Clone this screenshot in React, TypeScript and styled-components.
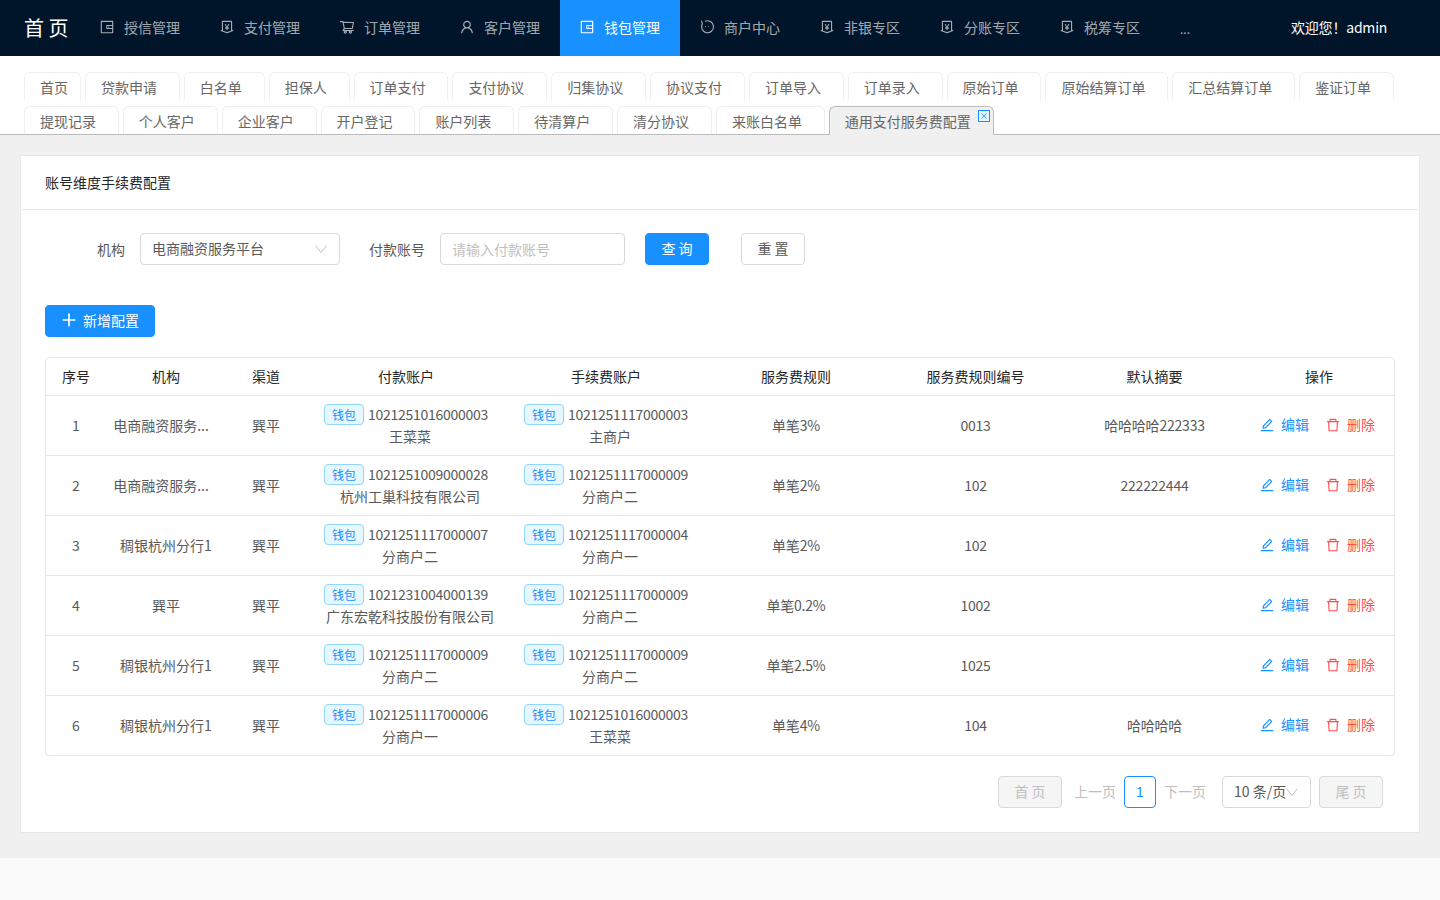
import React from "react";
import styled, { createGlobalStyle } from "styled-components";
import { Plus } from "lucide-react";
import {
  AiOutlineWallet,
  AiOutlineMoneyCollect,
  AiOutlineShoppingCart,
  AiOutlineUser,
  AiOutlineEdit,
  AiOutlineDelete,
  AiOutlineClose,
} from "react-icons/ai";

const GlobalStyle = createGlobalStyle`
  html, body {
    margin: 0;
    padding: 0;
    background: #fafafa;
    font-family: "Noto Sans CJK SC", "Liberation Sans", sans-serif;
    font-size: 14px;
    color: #595959;
  }
  * {
    box-sizing: border-box;
  }
`;

const Page = styled.div`
  width: 1440px;
  height: 900px;
  overflow: hidden;
  display: flex;
  flex-direction: column;
`;

const Header = styled.header`
  height: 56px;
  background: #001529;
  display: flex;
  align-items: stretch;
  flex-shrink: 0;
`;

const Brand = styled.div`
  width: 80px;
  padding-left: 24px;
  line-height: 56px;
  font-size: 20px;
  color: #fff;
  white-space: pre;
`;

const NavItem = styled.div<{ $active?: boolean }>`
  width: 120px;
  padding: 0 0 2px 19px;
  display: flex;
  align-items: center;
  gap: 9px;
  color: ${(p) => (p.$active ? "#fff" : "rgba(255, 255, 255, 0.65)")};
  background: ${(p) => (p.$active ? "#1890ff" : "transparent")};
  svg {
    font-size: 16px;
  }
`;

const More = styled.div`
  width: 131px;
  padding-left: 20px;
  line-height: 58px;
  font-size: 12px;
  color: rgba(255, 255, 255, 0.65);
`;

const Welcome = styled.div`
  line-height: 54px;
  color: #fff;
  white-space: pre;
  letter-spacing: -0.2px;
`;

const TabStrip = styled.div`
  background: #fff;
  padding: 16px 24px 0;
  border-bottom: 1px solid #bbb;
  display: flex;
  flex-wrap: wrap;
  column-gap: 4px;
  row-gap: 6px;
  height: 79px;
  flex-shrink: 0;
`;

const Tab = styled.div<{ $active?: boolean; $home?: boolean }>`
  position: relative;
  height: ${(p) => (p.$active ? "29px" : "28px")};
  padding: 0 ${(p) => (p.$home ? "12px" : "21.85px")} 0 15px;
  line-height: 28px;
  white-space: nowrap;
  border: 1px solid ${(p) => (p.$active ? "#bbb" : "#efefef")};
  border-bottom: none;
  border-radius: 6px 6px 0 0;
  background: ${(p) => (p.$active ? "#f0f0f0" : "#fff")};
  color: #666;
`;

const TabClose = styled.span`
  position: absolute;
  top: 3px;
  right: 3px;
  width: 12px;
  height: 12px;
  border: 1px solid #1890ff;
  background: #e6f7ff;
  color: #1890ff;
  display: flex;
  align-items: center;
  justify-content: center;
  font-size: 8px;
`;

const Content = styled.main`
  background: #f0f0f0;
  padding: 20px 20px 25px;
  flex-shrink: 0;
`;

const Card = styled.section`
  background: #fff;
  border: 1px solid #e8e8e8;
  height: 678px;
`;

const CardTitle = styled.div`
  height: 54px;
  padding-left: 24px;
  line-height: 52px;
  border-bottom: 1px solid #e8e8e8;
  color: #262626;
`;

const FilterRow = styled.div`
  display: flex;
  align-items: center;
  height: 32px;
  margin-top: 23px;
`;

const FieldLabel = styled.label<{ $width: number }>`
  width: ${(p) => p.$width}px;
  padding-right: 15px;
  text-align: right;
  color: #595959;
`;

const SelectBox = styled.div<{ $width: number }>`
  width: ${(p) => p.$width}px;
  height: 32px;
  padding: 0 12px 2px 11px;
  display: flex;
  align-items: center;
  justify-content: space-between;
  border: 1px solid #d9d9d9;
  border-radius: 4px;
  background: #fff;
  color: #595959;
  white-space: nowrap;
  svg {
    margin-top: 2px;
  }
`;

const TextInput = styled.input`
  width: 185px;
  height: 32px;
  padding: 0 11px;
  border: 1px solid #d9d9d9;
  border-radius: 4px;
  font: inherit;
  outline: none;
  &::placeholder {
    color: #bfbfbf;
  }
`;

const Button = styled.button<{ $primary?: boolean; $disabled?: boolean; $gap: number }>`
  width: 64px;
  height: 32px;
  margin-left: ${(p) => p.$gap}px;
  padding: 0 0 2px;
  border: 1px solid ${(p) => (p.$primary ? "#1890ff" : "#d9d9d9")};
  border-radius: 4px;
  background: ${(p) => (p.$primary ? "#1890ff" : p.$disabled ? "#f5f5f5" : "#fff")};
  color: ${(p) => (p.$primary ? "#fff" : p.$disabled ? "#bfbfbf" : "#595959")};
  font: inherit;
  white-space: pre;
`;

const AddButton = styled.button`
  display: flex;
  align-items: center;
  gap: 4px;
  width: 110px;
  height: 32px;
  margin: 40px 0 0 24px;
  padding: 0 0 2px 13px;
  border: 1px solid #1890ff;
  border-radius: 4px;
  background: #1890ff;
  color: #fff;
  font: inherit;
`;

const TableWrap = styled.div`
  margin: 20px 24px 0;
  border: 1px solid #e8e8e8;
  border-radius: 4px;
  overflow: hidden;
`;

const Table = styled.table`
  width: 100%;
  table-layout: fixed;
  border-collapse: collapse;
  text-align: center;
`;

const Th = styled.th`
  height: 37px;
  padding: 0;
  font-weight: 400;
  color: #262626;
  border-bottom: 1px solid #e8e8e8;
`;

const Td = styled.td<{ $tight?: boolean }>`
  height: 60px;
  padding: 0;
  color: #595959;
  border-bottom: 1px solid #e8e8e8;
  line-height: 22px;
  letter-spacing: ${(p) => (p.$tight ? "-0.2px" : "normal")};
  tr:last-child & {
    border-bottom: none;
  }
`;

const OrgName = styled.div<{ $truncated: boolean }>`
  padding-right: ${(p) => (p.$truncated ? "10px" : "0")};
`;

const AccountLine = styled.div`
  display: flex;
  justify-content: center;
  align-items: flex-start;
  gap: 4px;
  height: 22px;
`;

const Badge = styled.span`
  width: 40px;
  height: 21px;
  margin-top: 1px;
  border: 1px solid #91d5ff;
  border-radius: 4px;
  background: #e6f7ff;
  color: #1890ff;
  font-size: 12px;
  line-height: 20px;
`;

const Digits = styled.span`
  letter-spacing: -0.27px;
`;

const AccountName = styled.div`
  padding-left: 8px;
  white-space: nowrap;
`;

const Actions = styled.div`
  display: flex;
  justify-content: flex-end;
  padding-right: 19px;
  margin-top: -2px;
  gap: 16px;
`;

const ActionLink = styled.a<{ $danger?: boolean }>`
  display: flex;
  align-items: center;
  gap: 6px;
  color: ${(p) => (p.$danger ? "#ff4d4f" : "#1890ff")};
  svg {
    font-size: 16px;
    margin-top: 2px;
  }
`;

const Pager = styled.div`
  display: flex;
  align-items: center;
  justify-content: flex-end;
  margin: 20px 36px 0 0;
`;

const PagerText = styled.span<{ $gap: number }>`
  margin-left: ${(p) => p.$gap}px;
  padding-bottom: 2px;
  color: #bfbfbf;
`;

const PageNumber = styled.span`
  width: 32px;
  height: 32px;
  margin-left: 8px;
  border: 1px solid #1890ff;
  border-radius: 4px;
  color: #1890ff;
  line-height: 30px;
  text-align: center;
  font-family: "Liberation Sans", sans-serif;
`;

const PageSize = styled(SelectBox)`
  margin-left: 16px;
`;

const FooterBand = styled.div`
  flex: 1;
  background: #fafafa;
`;

function Chevron() {
  return (
    <svg width="12" height="8" viewBox="0 0 12 8" fill="none" stroke="#bfbfbf" strokeWidth="1">
      <polyline points="0.5,0.5 6,7.5 11.5,0.5" />
    </svg>
  );
}

function MerchantIcon() {
  return (
    <svg width="1em" height="1em" viewBox="0 0 16 16" fill="none" stroke="currentColor" strokeWidth="1.1">
      <path d="M2.4 1.6 L3.4 4.6 A6 6 0 1 0 6 2.3" />
      <circle cx="6.6" cy="7.6" r="0.5" fill="currentColor" stroke="none" />
      <circle cx="9.6" cy="7.6" r="0.5" fill="currentColor" stroke="none" />
    </svg>
  );
}

const navItems = [
  { label: "授信管理", icon: <AiOutlineWallet /> },
  { label: "支付管理", icon: <AiOutlineMoneyCollect /> },
  { label: "订单管理", icon: <AiOutlineShoppingCart /> },
  { label: "客户管理", icon: <AiOutlineUser /> },
  { label: "钱包管理", icon: <AiOutlineWallet />, active: true },
  { label: "商户中心", icon: <MerchantIcon /> },
  { label: "非银专区", icon: <AiOutlineMoneyCollect /> },
  { label: "分账专区", icon: <AiOutlineMoneyCollect /> },
  { label: "税筹专区", icon: <AiOutlineMoneyCollect /> },
];

const tabs = [
  "首页", "贷款申请", "白名单", "担保人", "订单支付", "支付协议", "归集协议", "协议支付",
  "订单导入", "订单录入", "原始订单", "原始结算订单", "汇总结算订单", "鉴证订单",
  "提现记录", "个人客户", "企业客户", "开户登记", "账户列表", "待清算户", "清分协议", "来账白名单",
];

const columns = [
  { title: "序号", width: 60 },
  { title: "机构", width: 120 },
  { title: "渠道", width: 80 },
  { title: "付款账户", width: 200 },
  { title: "手续费账户", width: 200 },
  { title: "服务费规则", width: 180 },
  { title: "服务费规则编号", width: 179 },
  { title: "默认摘要", width: 179 },
  { title: "操作", width: 150 },
];

const rows = [
  { org: "电商融资服务...", payNo: "1021251016000003", payName: "王菜菜", feeNo: "1021251117000003", feeName: "主商户", rule: "单笔3%", code: "0013", memo: "哈哈哈哈222333" },
  { org: "电商融资服务...", payNo: "1021251009000028", payName: "杭州工巢科技有限公司", feeNo: "1021251117000009", feeName: "分商户二", rule: "单笔2%", code: "102", memo: "222222444" },
  { org: "稠银杭州分行1", payNo: "1021251117000007", payName: "分商户二", feeNo: "1021251117000004", feeName: "分商户一", rule: "单笔2%", code: "102", memo: "" },
  { org: "巽平", payNo: "1021231004000139", payName: "广东宏乾科技股份有限公司", feeNo: "1021251117000009", feeName: "分商户二", rule: "单笔0.2%", code: "1002", memo: "" },
  { org: "稠银杭州分行1", payNo: "1021251117000009", payName: "分商户二", feeNo: "1021251117000009", feeName: "分商户二", rule: "单笔2.5%", code: "1025", memo: "" },
  { org: "稠银杭州分行1", payNo: "1021251117000006", payName: "分商户一", feeNo: "1021251016000003", feeName: "王菜菜", rule: "单笔4%", code: "104", memo: "哈哈哈哈" },
];

function Account({ no, name }: { no: string; name: string }) {
  return (
    <>
      <AccountLine>
        <Badge>钱包</Badge>
        <Digits>{no}</Digits>
      </AccountLine>
      <AccountName>{name}</AccountName>
    </>
  );
}

export default function App() {
  return (
    <Page>
      <GlobalStyle />
      <Header>
        <Brand>首 页</Brand>
        {navItems.map((item) => (
          <NavItem key={item.label} $active={item.active}>
            {item.icon}
            {item.label}
          </NavItem>
        ))}
        <More>...</More>
        <Welcome>欢迎您！admin</Welcome>
      </Header>

      <TabStrip>
        {tabs.map((t) => (
          <Tab key={t} $home={t === "首页"}>
            {t}
          </Tab>
        ))}
        <Tab $active>
          通用支付服务费配置
          <TabClose>
            <AiOutlineClose />
          </TabClose>
        </Tab>
      </TabStrip>

      <Content>
        <Card>
          <CardTitle>账号维度手续费配置</CardTitle>
          <FilterRow>
            <FieldLabel $width={119}>机构</FieldLabel>
            <SelectBox $width={200}>
              电商融资服务平台
              <Chevron />
            </SelectBox>
            <FieldLabel $width={100}>付款账号</FieldLabel>
            <TextInput placeholder="请输入付款账号" />
            <Button $primary $gap={20}>查 询</Button>
            <Button $gap={32}>重 置</Button>
          </FilterRow>
          <AddButton>
            <Plus size={20} strokeWidth={2} />
            新增配置
          </AddButton>
          <TableWrap>
            <Table>
              <colgroup>
                {columns.map((c) => (
                  <col key={c.title} width={c.width} />
                ))}
              </colgroup>
              <thead>
                <tr>
                  {columns.map((c) => (
                    <Th key={c.title}>{c.title}</Th>
                  ))}
                </tr>
              </thead>
              <tbody>
                {rows.map((r, i) => (
                  <tr key={i}>
                    <Td>{i + 1}</Td>
                    <Td>
                      <OrgName $truncated={r.org.endsWith("...")}>{r.org}</OrgName>
                    </Td>
                    <Td>巽平</Td>
                    <Td>
                      <Account no={r.payNo} name={r.payName} />
                    </Td>
                    <Td>
                      <Account no={r.feeNo} name={r.feeName} />
                    </Td>
                    <Td $tight>{r.rule}</Td>
                    <Td>
                      <Digits>{r.code}</Digits>
                    </Td>
                    <Td $tight>{r.memo}</Td>
                    <Td>
                      <Actions>
                        <ActionLink>
                          <AiOutlineEdit />
                          编辑
                        </ActionLink>
                        <ActionLink $danger>
                          <AiOutlineDelete />
                          删除
                        </ActionLink>
                      </Actions>
                    </Td>
                  </tr>
                ))}
              </tbody>
            </Table>
          </TableWrap>
          <Pager>
            <Button $disabled $gap={0}>首 页</Button>
            <PagerText $gap={12}>上一页</PagerText>
            <PageNumber>1</PageNumber>
            <PagerText $gap={8}>下一页</PagerText>
            <PageSize $width={89}>
              10 条/页
              <Chevron />
            </PageSize>
            <Button $disabled $gap={8}>尾 页</Button>
          </Pager>
        </Card>
      </Content>
      <FooterBand />
    </Page>
  );
}
